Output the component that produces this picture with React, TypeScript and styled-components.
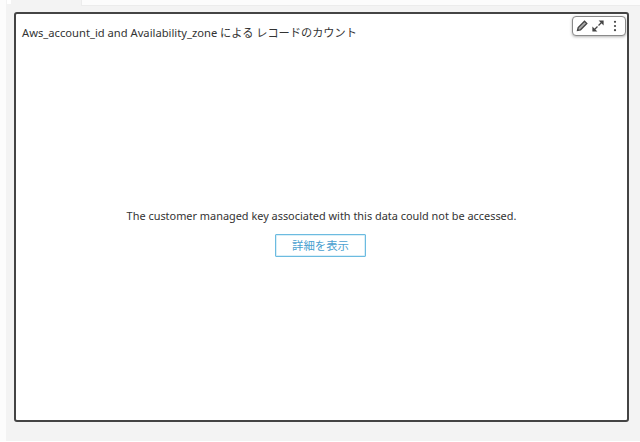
import React from "react";
import styled, { createGlobalStyle } from "styled-components";

const Global = createGlobalStyle`
  html, body { margin: 0; padding: 0; background: #fff; }
  body { font-family: "Noto Sans", "Noto Sans CJK JP", sans-serif; }
`;

const Shell = styled.div`
  display: flex;
  width: 640px;
  height: 441px;
  background: #fff;
`;

const Gutter = styled.div`
  width: 6px;
  flex: none;
  background: #fcfcfc;
`;

const Page = styled.div`
  flex: 1;
  background: #f3f3f3;
  display: flex;
  flex-direction: column;
  overflow: hidden;
`;

const TabStrip = styled.div`
  height: 6px;
  flex: none;
  display: flex;
  justify-content: space-between;
`;

const TabTick = styled.div`
  width: 4px;
  height: 4px;
  margin-left: 1px;
  background: #fff;
`;

const TabBody = styled.div`
  width: 558px;
  background: #fcfcfc;
  border-bottom: 1px solid #ececec;
  border-left: 1px solid #ececec;
`;

const Canvas = styled.div`
  flex: 1;
  padding: 6px 11px 19px 8px;
  display: flex;
  min-height: 0;
`;

const Panel = styled.section`
  position: relative;
  flex: 1;
  box-sizing: border-box;
  background: #fff;
  border: 2px solid #444;
  border-radius: 3px;
  display: flex;
  flex-direction: column;
`;

const Title = styled.h2`
  margin: 0;
  padding: 10px 6px 0;
  font-size: 11.2px;
  line-height: 18px;
  font-weight: 400;
  color: #333;
  white-space: nowrap;
`;

const Toolbar = styled.div`
  position: absolute;
  top: 2px;
  right: 1px;
  width: 54px;
  height: 20px;
  box-sizing: border-box;
  background: #fff;
  border: 1px solid #8a8a8a;
  border-radius: 4px;
  box-shadow: 0 1px 3px rgba(0,0,0,.3);
  display: flex;
  align-items: center;
  padding-left: 3px;
  gap: 4px;
`;

const ToolIcon = styled.svg`
  width: 12px;
  height: 12px;
  flex: none;
  fill: none;
  stroke: #444;
  stroke-width: 1.3;
`;

const Dots = styled(ToolIcon)`
  margin-left: 1px;
`;

const Message = styled.div`
  flex: 1;
  display: flex;
  flex-direction: column;
  align-items: center;
  padding-top: 165px;
`;

const MessageText = styled.p`
  margin: 0;
  font-size: 10.92px;
  line-height: 18px;
  color: #333;
  white-space: nowrap;
`;

const DetailButton = styled.button`
  margin: 9px 2px 0 0;
  width: 91px;
  height: 23px;
  box-sizing: border-box;
  padding: 0;
  background: #fff;
  border: 1px solid #6cbbe0;
  border-radius: 1px;
  box-shadow: inset 0 0 0 0.5px #b5dff2;
  color: #4a9fd0;
  font-family: inherit;
  font-size: 11.4px;
  line-height: 20px;
`;

export default function App() {
  return (
    <>
      <Global />
      <Shell>
        <Gutter />
        <Page>
          <TabStrip>
            <TabTick />
            <TabBody />
          </TabStrip>
          <Canvas>
            <Panel>
              <Title>Aws_account_id and Availability_zone による レコードのカウント</Title>
              <Toolbar>
                <ToolIcon viewBox="0 0 12 12">
                  <path d="M1.5 10.5l.7-3L8.5 1.2l2.3 2.3-6.3 6.3z" fill="#aaa" />
                </ToolIcon>
                <ToolIcon viewBox="0 0 12 12">
                  <path d="M6.5 5.5l3-3" />
                  <path d="M6.6 0.4H11.6V5.4z" fill="#444" stroke="none" />
                  <path d="M5.5 6.5l-3 3" />
                  <path d="M0.4 6.6V11.6H5.4z" fill="#444" stroke="none" />
                </ToolIcon>
                <Dots viewBox="0 0 12 12">
                  <circle cx="6" cy="1.8" r="1.1" fill="#444" stroke="none" />
                  <circle cx="6" cy="6" r="1.1" fill="#444" stroke="none" />
                  <circle cx="6" cy="10.2" r="1.1" fill="#444" stroke="none" />
                </Dots>
              </Toolbar>
              <Message>
                <MessageText>The customer managed key associated with this data could not be accessed.</MessageText>
                <DetailButton>詳細を表示</DetailButton>
              </Message>
            </Panel>
          </Canvas>
        </Page>
      </Shell>
    </>
  );
}
